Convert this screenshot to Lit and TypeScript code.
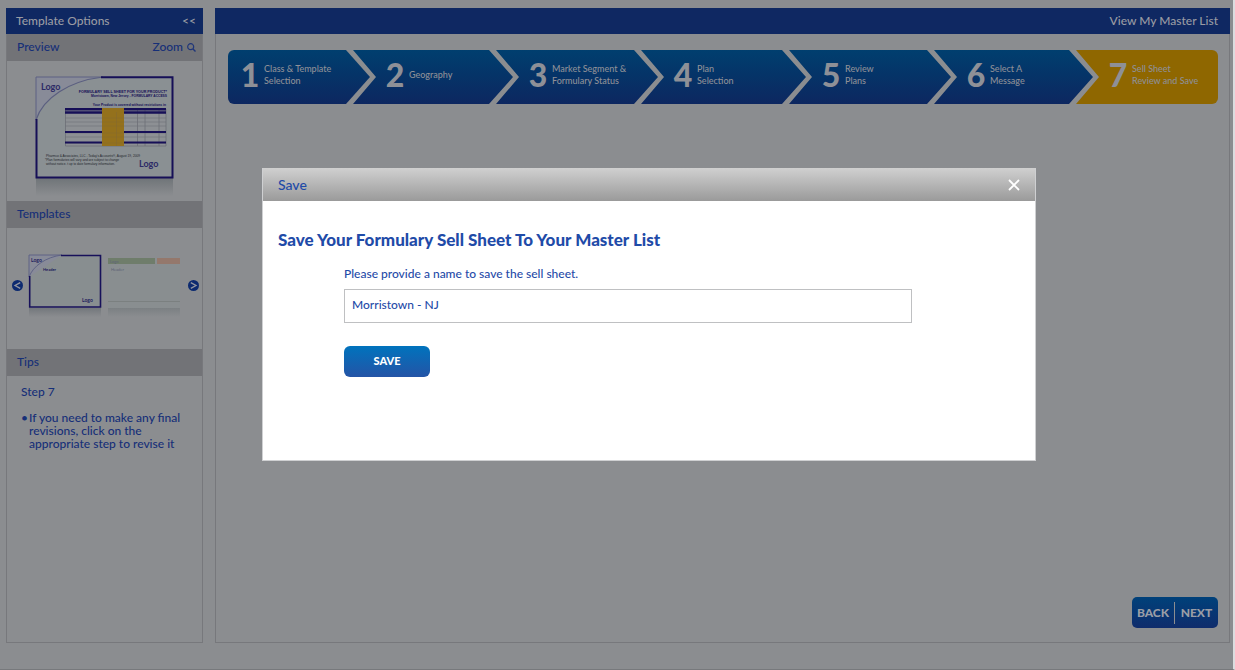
import { LitElement, html, css, svg } from "lit";
import { customElement, state } from "lit/decorators.js";
import { classMap } from "lit/directives/class-map.js";

const STEPS: string[][] = [
  ["Class & Template", "Selection"],
  ["Geography"],
  ["Market Segment &", "Formulary Status"],
  ["Plan", "Selection"],
  ["Review", "Plans"],
  ["Select A", "Message"],
  ["Sell Sheet", "Review and Save"],
];

@customElement("step-bar")
export class StepBar extends LitElement {
  static styles = css`
    :host { display: block; }
    .steps {
      display: grid;
      grid-template-columns: 125fr 143fr 145fr 148fr 145fr 142fr 142fr;
      height: 54px;
      margin: 0;
      padding: 0;
      list-style: none;
      border-radius: 6px;
      overflow: hidden;
    }
    .step { margin-right: -17px; min-width: 0; display: grid; }
    .link {
      display: flex;
      align-items: center;
      gap: 4px;
      padding: 0 0 4px 32px;
      color: #8e9097;
      text-decoration: none;
      background: linear-gradient(#003f6f, #053468 45%, #0d2760);
      clip-path: polygon(0 0, calc(100% - 24px) 0, 100% 50%, calc(100% - 24px) 100%, 0 100%, 23px 50%);
    }
    .first .link {
      padding-left: 12px;
      clip-path: polygon(0 0, calc(100% - 24px) 0, 100% 50%, calc(100% - 24px) 100%, 0 100%);
    }
    .last { margin-right: 0; }
    .last .link {
      background: #8f6700;
      clip-path: polygon(0 0, 100% 0, 100% 100%, 0 100%, 23px 50%);
    }
    .num { width: 20px; font-size: 32px; line-height: 32px; font-weight: 900; text-align: center; }
    .label { font-size: 9px; line-height: 12px; font-weight: 500; white-space: nowrap; }
    .row { display: block; }
  `;

  render() {
    return html`<ol class="steps">
      ${STEPS.map((lines, i) => html`
        <li class=${classMap({ step: true, first: i === 0, last: i === STEPS.length - 1 })}>
          <a class="link" href="#step-${i + 1}">
            <span class="num">${i + 1}</span>
            <span class="label">${lines.map((l) => html`<span class="row">${l}</span>`)}</span>
          </a>
        </li>`)}
    </ol>`;
  }
}

@customElement("app-root")
export class AppRoot extends LitElement {
  @state() private open = true;

  static styles = css`
    :host {
      display: block;
      font-family: Lato, "Gill Sans", sans-serif;
      font-size: 12px;
      line-height: 16px;
      font-weight: 500;
      color: #162f78;
    }
    * { box-sizing: border-box; }
    h1, h2, h3, p, ul { margin: 0; padding: 0; font-weight: inherit; font-size: 12px; }
    button { font: inherit; border: 0; padding: 0; background: none; color: inherit; cursor: pointer; }
    a { color: inherit; text-decoration: none; }
    .page {
      position: relative;
      display: flex;
      gap: 12px;
      min-height: 100vh;
      padding: 8px 3px 26px 6px;
      background: #8b8d90;
      border-right: 2px solid #dcdddf;
      border-bottom: 1px solid #77797c;
    }
    .side { flex: 0 0 197px; border: 1px solid #77787c; border-top: 0; }
    .bar {
      display: flex;
      align-items: center;
      justify-content: space-between;
      height: 26px;
      padding: 0 7px 1px 10px;
      margin: 0 -1px;
      background: #0f2862;
      color: #999ba3;
    }
    .bar.wide { justify-content: flex-end; padding-right: 12px; }
    .sub {
      display: flex;
      align-items: center;
      justify-content: space-between;
      height: 27px;
      padding: 0 6px 1px 10px;
      background: #727377;
    }
    .zoom { display: flex; align-items: center; gap: 4px; }
    .preview { display: flex; justify-content: center; height: 140px; padding: 15px 1px 0 0; }
    .carousel {
      display: flex;
      align-items: flex-start;
      height: 121px;
      padding: 26px 3px 0 5px;
    }
    .arrow { display: block; width: 11px; height: 11px; margin-top: 26px; }
    .carousel .thumb { margin-left: 5px; }
    .carousel .arrow:last-child { margin-left: auto; }
    .arrow svg, .zoom svg, .close svg { display: block; }
    .thumb { display: block; }
    .tips { padding: 8px 14px; }
    .tips ul { padding: 11px 0 0 8px; list-style: none; line-height: 13px; }
    .tips li::before { content: "•"; float: left; margin-left: -8px; }
    .main { flex: 1; min-width: 0; display: flex; flex-direction: column; border: 1px solid #77787c; border-top: 0; }
    .content { flex: 1; display: flex; flex-direction: column; justify-content: space-between; padding: 16px 11px 14px 12px; }
    .pager {
      align-self: flex-end;
      display: flex;
      align-items: center;
      height: 31px;
      border-radius: 5px;
      background: linear-gradient(#00417a, #0f2c6c);
      color: #9a9da6;
      font-weight: 900;
    }
    .pager button { width: 42px; height: 22px; }
    .pager button + button { border-left: 1px solid #8b8d90; width: 44px; }
    .overlay { position: absolute; inset: 0; padding: 168px 197px 0 262px; color: #1f4ba8; }
    .dialog { background: #ffffff; border: 1px solid #cfd0d2; border-top: 0; min-height: 293px; }
    .head {
      display: flex;
      align-items: center;
      justify-content: space-between;
      height: 33px;
      padding: 0 15px;
      background: linear-gradient(#d0d0d0, #9a9a9a);
    }
    .head h2 { font-size: 14px; line-height: 20px; padding-top: 1px; }
    .body { padding: 29px 15px 40px; }
    .body .title { font-size: 17px; line-height: 20px; font-weight: 900; }
    .form { display: grid; justify-items: start; padding: 16px 108px 0 66px; }
    .field {
      width: 100%;
      height: 34px;
      margin: 7px 0 23px;
      padding: 0 7px 4px;
      border: 1px solid #bfc0c2;
      font: inherit;
      color: #1f4ba8;
      background: #ffffff;
      outline: 0;
    }
    .save {
      width: 86px;
      height: 31px;
      padding-bottom: 2px;
      border-radius: 6px;
      background: linear-gradient(#0073bd, #2454a6);
      color: #ffffff;
      font-size: 11px;
      font-weight: 900;
    }
  `;

  private arrow(dir: "left" | "right") {
    const d = dir === "left" ? "M8.2 2.6 3 5.5l5.2 2.9" : "M2.8 2.6 8 5.5 2.8 8.4";
    return html`<svg width="11" height="11" viewBox="0 0 11 11" aria-hidden="true">
      <circle cx="5.5" cy="5.5" r="5.5" fill="#0d2a70"></circle>
      <path d=${d} fill="none" stroke="#9497a0" stroke-width="1.3"></path>
    </svg>`;
  }

  private previewArt() {
    const rows = [42, 46, 50, 57, 61, 67];
    return html`<svg class="thumb" width="139" height="122" viewBox="0 0 139 122" role="img" aria-label="Sell sheet preview">
      <defs>
        <linearGradient id="fade" x1="0" y1="0" x2="0" y2="1">
          <stop offset="0" stop-color="#6f7478"></stop>
          <stop offset="1" stop-color="#8b8d90"></stop>
        </linearGradient>
      </defs>
      <rect x="1" y="102" width="137" height="18" fill="url(#fade)"></rect>
      <rect x="1.5" y="1.5" width="136" height="100" fill="#8a9093"></rect>
      <path d="M1 44C8 22 34 5 68 1H1Z" fill="#888b98"></path>
      <path d="M1 44V1H68" fill="none" stroke="#5d6183" stroke-width="1"></path>
      <path d="M1 44C8 22 34 5 68 1" fill="none" stroke="#5b5f80" stroke-width="1.2"></path>
      <path d="M66 1.2H137.5V101.5H1.5V43" fill="none" stroke="#160f57" stroke-width="2"></path>
      <g font-family="Lato, sans-serif" fill="#2c2a66">
        <text x="6" y="14" font-size="9" font-weight="700">Logo</text>
        <text x="104" y="91" font-size="9" font-weight="700">Logo</text>
        <g font-family="Liberation Sans, sans-serif" font-weight="700" fill="#160f57">
          <text x="132" y="16.5" text-anchor="end" font-size="3.7">FORMULARY SELL SHEET FOR YOUR PRODUCT*</text>
          <text x="132" y="21" text-anchor="end" font-size="3.3">Morristown, New Jersey - FORMULARY ACCESS</text>
          <text x="131" y="30" text-anchor="end" font-size="3.3">Your Product is covered without restrictions in</text>
        </g>
        <g font-family="Liberation Sans, sans-serif" font-size="3.2" fill="#24262c">
          <text x="11" y="80.5">Pharmco &amp; Associates, LLC - Today's Accounts®, August 19, 2009</text>
          <text x="10" y="84.5">*Plan formularies will vary and are subject to change</text>
          <text x="11" y="88.5">without notice. t up to date formulary information.</text>
        </g>
      </g>
      <rect x="30.5" y="33" width="100" height="37" fill="#8d9094"></rect>
      ${rows.map((y) => svg`<path d="M30 ${y}H131" stroke="#6c6e76" stroke-width=".6"></path>`)}
      <path d="M30.5 33V70H131V33M102.5 33V70M110 33V70M124 33V70" fill="none" stroke="#6c6e76" stroke-width=".8"></path>
      <path d="M30 33.2H131M30 36.5H131" stroke="#160f57" stroke-width="2.4"></path>
      <path d="M30 56H131M30 66.5H131" stroke="#160f57" stroke-width="2"></path>
      <rect x="67" y="32" width="22" height="38" fill="#94711c"></rect>
      ${rows.map((y) => svg`<path d="M67 ${y}H89" stroke="#866a2c" stroke-width=".5"></path>`)}
      <path d="M81.5 36V70" stroke="#866a2c" stroke-width=".7"></path>
    </svg>`;
  }

  private thumbOne() {
    return html`<svg class="thumb" width="74" height="66" viewBox="0 0 74 66" role="img" aria-label="Template one">
      <rect x="1" y="54" width="72" height="9" fill="url(#fadeOne)"></rect>
      <defs><linearGradient id="fadeOne" x1="0" y1="0" x2="0" y2="1">
        <stop offset="0" stop-color="#73777c"></stop><stop offset="1" stop-color="#8b8d90"></stop>
      </linearGradient></defs>
      <rect x="1" y="1" width="72" height="53" fill="#888e90"></rect>
      <path d="M1 23V1H34" fill="#888b98" stroke="#5f6385"></path>
      <path d="M1 23C5 12 18 3 34 1" fill="none" stroke="#5f6385"></path>
      <path d="M33 1.5H72.5V53H1.7V22" fill="none" stroke="#17105a" stroke-width="1.6"></path>
      <g font-family="Lato, sans-serif" font-size="5" font-weight="700" fill="#201a5c">
        <text x="3" y="8">Logo</text><text x="54" y="48">Logo</text>
        <text x="15" y="17" font-size="4">Header</text>
      </g>
    </svg>`;
  }

  private thumbTwo() {
    return html`<svg class="thumb" width="74" height="66" viewBox="0 0 74 66" role="img" aria-label="Template two">
      <defs><linearGradient id="fadeTwo" x1="0" y1="0" x2="0" y2="1">
        <stop offset="0" stop-color="#7b8083"></stop><stop offset="1" stop-color="#8b8d90"></stop>
      </linearGradient></defs>
      <rect x="1" y="4" width="72" height="50" fill="#898e90"></rect>
      <rect x="1" y="54" width="72" height="9" fill="url(#fadeTwo)"></rect>
      <rect x="1" y="4" width="47" height="6" fill="#6f7d6b"></rect>
      <rect x="50" y="4" width="23" height="6" fill="#94786c"></rect>
      <path d="M1 47.5H73" stroke="#7b8080"></path>
      <g font-family="Lato, sans-serif" font-size="4" fill="#5f6577">
        <text x="3" y="8.5">Logo</text><text x="4" y="17">Header</text>
      </g>
    </svg>`;
  }

  render() {
    return html`
      <div class="page">
        <aside class="side">
          <header class="bar">
            <h1>Template Options</h1>
            <button type="button" aria-label="Collapse">&lt;&lt;</button>
          </header>
          <div class="sub">
            <h2>Preview</h2>
            <button class="zoom" type="button">Zoom
              <svg width="9" height="9" viewBox="0 0 9 9" fill="none" stroke="#1f367a" stroke-width="1.2" aria-hidden="true">
                <circle cx="3.7" cy="3.7" r="3"></circle><path d="m6 6 2.5 2.5" stroke-width="1.4"></path>
              </svg>
            </button>
          </div>
          <div class="preview">${this.previewArt()}</div>
          <div class="sub"><h2>Templates</h2></div>
          <div class="carousel">
            <button class="arrow" type="button" aria-label="Previous template">${this.arrow("left")}</button>
            ${this.thumbOne()} ${this.thumbTwo()}
            <button class="arrow" type="button" aria-label="Next template">${this.arrow("right")}</button>
          </div>
          <div class="sub"><h2>Tips</h2></div>
          <div class="tips">
            <h3>Step 7</h3>
            <ul><li>If you need to make any final revisions, click on the appropriate step to revise it</li></ul>
          </div>
        </aside>
        <main class="main">
          <nav class="bar wide"><a href="#master-list">View My Master List</a></nav>
          <div class="content">
            <step-bar></step-bar>
            <div class="pager">
              <button type="button">BACK</button><button type="button">NEXT</button>
            </div>
          </div>
        </main>
        ${this.open ? html`
          <div class="overlay">
            <section class="dialog" role="dialog" aria-modal="true" aria-labelledby="dialog-title">
              <header class="head">
                <h2>Save</h2>
                <button class="close" type="button" aria-label="Close" @click=${() => (this.open = false)}>
                  <svg width="12" height="12" viewBox="0 0 12 12" aria-hidden="true">
                    <path d="m1 1 10 10M11 1 1 11" stroke="#ffffff" stroke-width="1.8"></path>
                  </svg>
                </button>
              </header>
              <div class="body">
                <h1 class="title" id="dialog-title">Save Your Formulary Sell Sheet To Your Master List</h1>
                <form class="form" @submit=${(e: Event) => e.preventDefault()}>
                  <label for="sheet-name">Please provide a name to save the sell sheet.</label>
                  <input class="field" id="sheet-name" type="text" value="Morristown - NJ" />
                  <button class="save" type="submit">SAVE</button>
                </form>
              </div>
            </section>
          </div>` : null}
      </div>`;
  }
}
